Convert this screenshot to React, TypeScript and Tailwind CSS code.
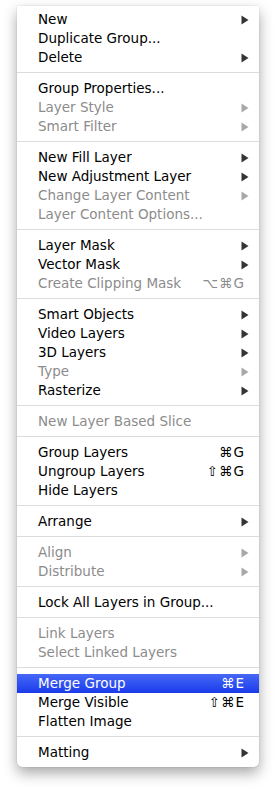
import React from "react";

type Item = { label: string; disabled?: boolean; arrow?: boolean; shortcut?: string; active?: boolean };

const groups: Item[][] = [
  [
    { label: "New", arrow: true },
    { label: "Duplicate Group..." },
    { label: "Delete", arrow: true },
  ],
  [
    { label: "Group Properties..." },
    { label: "Layer Style", disabled: true, arrow: true },
    { label: "Smart Filter", disabled: true, arrow: true },
  ],
  [
    { label: "New Fill Layer", arrow: true },
    { label: "New Adjustment Layer", arrow: true },
    { label: "Change Layer Content", disabled: true, arrow: true },
    { label: "Layer Content Options...", disabled: true },
  ],
  [
    { label: "Layer Mask", arrow: true },
    { label: "Vector Mask", arrow: true },
    { label: "Create Clipping Mask", disabled: true, shortcut: "⌥⌘G" },
  ],
  [
    { label: "Smart Objects", arrow: true },
    { label: "Video Layers", arrow: true },
    { label: "3D Layers", arrow: true },
    { label: "Type", disabled: true, arrow: true },
    { label: "Rasterize", arrow: true },
  ],
  [{ label: "New Layer Based Slice", disabled: true }],
  [
    { label: "Group Layers", shortcut: "⌘G" },
    { label: "Ungroup Layers", shortcut: "⇧⌘G" },
    { label: "Hide Layers" },
  ],
  [{ label: "Arrange", arrow: true }],
  [
    { label: "Align", disabled: true, arrow: true },
    { label: "Distribute", disabled: true, arrow: true },
  ],
  [{ label: "Lock All Layers in Group..." }],
  [
    { label: "Link Layers", disabled: true },
    { label: "Select Linked Layers", disabled: true },
  ],
  [
    { label: "Merge Group", shortcut: "⌘E", active: true },
    { label: "Merge Visible", shortcut: "⇧⌘E" },
    { label: "Flatten Image" },
  ],
  [{ label: "Matting", arrow: true }],
];

function Arrow({ color }: { color: string }) {
  return (
    <svg width="8" height="10" viewBox="0 0 8 10" className="block">
      <path d="M0.5 0.5 L7.5 5 L0.5 9.5 Z" fill={color} />
    </svg>
  );
}

function Row({ item }: { item: Item }) {
  const textColor = item.active ? "text-white" : item.disabled ? "text-[#8c8c8c]" : "text-black";
  const bg = item.active ? "bg-gradient-to-b from-[#4767f6] to-[#1b39ea]" : "";
  return (
    <div className={`flex h-[19px] items-center pl-[21px] ${bg} ${textColor}`}>
      <span className="flex-1 whitespace-nowrap leading-[19px]">{item.label}</span>
      {item.shortcut && (
        <span className="pr-[14px] leading-[19px] tracking-[1px]">{item.shortcut}</span>
      )}
      {item.arrow && (
        <span className="pr-[10px]">
          <Arrow color={item.disabled ? "#a8a8a8" : "#333333"} />
        </span>
      )}
    </div>
  );
}

export default function App() {
  return (
    <div className="min-h-[794px] w-[276px] bg-white pt-[6px] pl-[17px]">
      <div
        className="w-[242px] rounded-b-[5px] bg-white pt-[4px] pb-[5px] shadow-[0_6px_14px_rgba(0,0,0,0.35),0_0_1px_rgba(0,0,0,0.35)] text-[13.5px]"
        style={{ fontFamily: '"DejaVu Sans", "Lucida Grande", sans-serif' }}
      >
        {groups.map((g, gi) => (
          <React.Fragment key={gi}>
            {gi > 0 && (
              <div className="pt-[5px] pb-[6px]">
                <div className="h-px bg-[#dcdcdc]" />
              </div>
            )}
            {g.map((it, ii) => (
              <Row key={ii} item={it} />
            ))}
          </React.Fragment>
        ))}
      </div>
    </div>
  );
}
